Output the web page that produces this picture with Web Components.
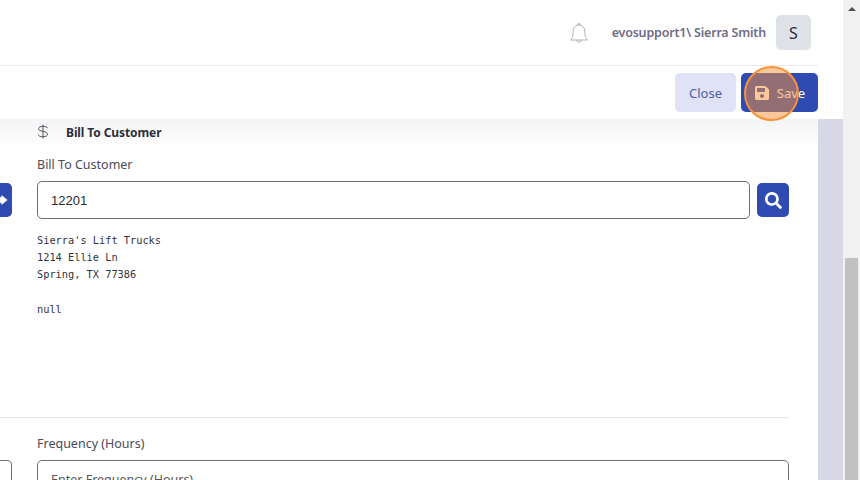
<!DOCTYPE html>
<html>
<head>
<meta charset="utf-8">
<title>Bill To Customer</title>
<style>
  html, body { margin: 0; height: 100%; overflow: hidden; background: #fff; }
  body { font-family: "Noto Sans", "Open Sans", sans-serif; }
</style>
</head>
<body>
<app-shell>
  <top-bar name="evosupport1\ Sierra Smith" initial="S"></top-bar>
  <action-bar></action-bar>
  <section-head>Bill To Customer</section-head>
  <form-row>
    <blue-button slot="left" icon="arrow"></blue-button>
    <text-field label="Bill To Customer" value="12201">
      <blue-button icon="search"></blue-button>
    </text-field>
    <address-block slot="after">Sierra's Lift Trucks
1214 Ellie Ln
Spring, TX 77386

null</address-block>
  </form-row>
  <hr-line></hr-line>
  <form-row class="second">
    <text-field slot="left" stub></text-field>
    <text-field label="Frequency (Hours)" placeholder="Enter Frequency (Hours)"></text-field>
  </form-row>
</app-shell>

<script>
function define(name, html) {
  customElements.define(name, class extends HTMLElement {
    connectedCallback() {
      if (this.shadowRoot) return;
      const root = this.attachShadow({ mode: "open" });
      root.innerHTML = typeof html === "function" ? html(this) : html;
    }
  });
}

define("app-shell", `
<style>
  :host { display: flex; height: 480px; width: 860px; position: relative; overflow: hidden; }
  .main { width: 818px; background: #fff; display: flex; flex-direction: column; overflow: hidden; flex: none; }
  .gutter { width: 25px; background: #d7d7e5; flex: none; margin-top: 119px; }
  .bar { width: 17px; background: #f1f1f1; flex: none; display: flex; flex-direction: column; align-items: center; }
  .arrow { margin-top: 7px; width: 0; height: 0; border: 4px solid transparent; border-top: 0; border-bottom: 4px solid #505050; }
  .thumb { margin-top: 247px; width: 13px; flex: 1; background: #c1c1c1; }
</style>
<div class="main"><slot></slot></div>
<div class="gutter"></div>
<div class="bar"><div class="arrow"></div><div class="thumb"></div></div>
`);

define("top-bar", el => `
<style>
  :host { display: flex; align-items: center; justify-content: flex-end; width: 843px; height: 66px; flex: none; box-sizing: border-box; padding-right: 32px; background: #fff; border-bottom: 1px solid #e9e9ee; position: relative; z-index: 2; }
  svg { width: 20px; height: 22px; margin-right: 23px; margin-top: 1px; }
  .name { font-size: 12.5px; font-weight: 600; color: #6f6c86; margin-right: 10px; letter-spacing: -.2px; white-space: nowrap; }
  .avatar { width: 35px; height: 35px; border-radius: 5px; background: #dee2e6; color: #2b2b3a; display: flex; align-items: center; justify-content: center; font-size: 16px; }
</style>
<svg viewBox="0 0 20 22" fill="none" stroke="#b0b0b0" stroke-width="1"><path d="M10 3a5.800 5.800 0 0 0-5.800 5.800c0 5.200-.7 7-2.600 9.200h16.800c-1.900-2.200-2.600-4-2.600-9.200A5.800 5.800 0 0 0 10 3zM8.600 3.200a1.400 1.700 0 0 1 2.800 0M7.800 18a2.200 2.200 0 0 0 4.400 0"/></svg>
<span class="name">${el.getAttribute("name")}</span>
<span class="avatar">${el.getAttribute("initial")}</span>
`);

define("action-bar", `
<style>
  :host { display: flex; align-items: center; justify-content: flex-end; gap: 5px; width: 843px; height: 53px; flex: none; box-sizing: border-box; padding: 0 25px 0 0; background: #fff; position: relative; z-index: 2; }
  .btn { height: 39px; border-radius: 5px; display: flex; align-items: center; justify-content: center; font-size: 13px; box-sizing: border-box; }
  .close { width: 61px; background: #dfe3f5; color: #4d5ca8; }
  .save { width: 77px; background: #2f4bb1; color: #fff; gap: 7px; position: relative; }
  svg { width: 16px; height: 16px; }
  .spot { position: absolute; left: 3px; top: -7px; width: 55px; height: 55px; box-sizing: border-box; border-radius: 50%; border: 2.5px solid #f79238; background: rgba(247,146,56,.5); }
</style>
<div class="btn close">Close</div>
<div class="btn save">
  <svg viewBox="0 0 448 512" fill="#fff"><path d="M433.941 129.941l-83.882-83.882A48 48 0 0 0 316.118 32H48C21.490 32 0 53.490 0 80v352c0 26.510 21.490 48 48 48h352c26.510 0 48-21.490 48-48V163.882a48 48 0 0 0-14.059-33.941zM224 416c-35.346 0-64-28.654-64-64 0-35.346 28.654-64 64-64s64 28.654 64 64c0 35.346-28.654 64-64 64zm96-304.520V212c0 6.627-5.373 12-12 12H76c-6.627 0-12-5.373-12-12V108c0-6.627 5.373-12 12-12h228.520c3.183 0 6.235 1.264 8.485 3.515l3.480 3.480A11.996 11.996 0 0 1 320 111.480z"/></svg>
  <span>Save</span>
  <div class="spot"></div>
</div>
`);

define("section-head", `
<style>
  :host { display: flex; align-items: center; height: 26px; flex: none; box-sizing: border-box; padding-left: 37px; background: linear-gradient(#f4f4f6, #fdfdfd); font-size: 12px; font-weight: 700; color: #2e2e38; letter-spacing: -.1px; }
  svg { width: 12px; height: 15px; margin-right: 17px; margin-top: -1px; }
</style>
<svg viewBox="0 0 12 15" fill="none" stroke="#55555f" stroke-width="1"><path d="M10.500 4.200C10.300 2.900 8.800 2.400 6 2.400 3.200 2.400 1.600 3.100 1.600 4.700 1.600 6.400 3.500 6.900 6 7.400c2.700.5 4.500 1.100 4.500 2.900 0 1.700-1.700 2.400-4.500 2.400-2.900 0-4.400-.7-4.600-2.200M6 .5v14"/></svg><slot></slot>
`);

define("form-row", `
<style>
  :host { display: grid; grid-template-columns: 12px 752px; column-gap: 25px; flex: none; }
  .left { display: flex; align-items: flex-start; justify-content: flex-end; min-width: 0; }
  .after { grid-column: 2; }
  :host(.second) { padding-top: 16px; }
  :host(:not(.second)) { padding-top: 10px; }
  :host(:not(.second)) .left { padding-top: 28px; }
  :host(.second) .left { padding-top: 26px; }
</style>
<div class="left"><slot name="left"></slot></div>
<div><slot></slot></div>
<div class="after"><slot name="after"></slot></div>
`);

define("text-field", el => {
  const stub = el.hasAttribute("stub");
  const label = el.getAttribute("label");
  const value = el.getAttribute("value") || "";
  const ph = el.getAttribute("placeholder") || "";
  return `
<style>
  :host { display: block; font-size: 12.5px; color: #4a4a55; }
  :host([stub]) { width: 12px; margin-left: auto; }
  .label { height: 18px; line-height: 18px; padding-top: 1px; margin-bottom: 7px; display: block; white-space: nowrap; }
  .line { display: flex; align-items: center; gap: 7px; }
  .box { flex: 1; min-width: 0; height: 38px; box-sizing: border-box; border: 1px solid #6f6f6f; border-radius: 5px; background: #fff; padding: 0 13px; display: flex; align-items: center; font-family: "Liberation Sans", sans-serif; font-size: 13px; white-space: nowrap; overflow: hidden; }
  :host([stub]) .box { width: 12px; flex: none; border-left: 0; border-radius: 0 5px 5px 0; padding: 0; }
  .val { color: #2b2b33; }
  .ph { color: #555; font-family: "Noto Sans", sans-serif; font-size: 12.5px; }
</style>
${stub ? "" : `<span class="label">${label}</span>`}
<div class="line">
  <div class="box">${value ? `<span class="val">${value}</span>` : `<span class="ph">${ph}</span>`}</div>
  <slot></slot>
</div>`;
});

define("blue-button", el => {
  const arrow = `<svg class="arrow" viewBox="0 0 12 12" fill="#fff"><path d="M0 3h1.500V1L7.500 6l-6 5V9H0z"/></svg>`;
  const search = `<svg viewBox="0 0 512 512" fill="#fff"><path d="M505 442.700L405.300 343c-4.500-4.500-10.600-7-17-7H372c27.600-35.300 44-79.700 44-128C416 93.100 322.900 0 208 0S0 93.100 0 208s93.100 208 208 208c48.300 0 92.700-16.400 128-44v16.300c0 6.400 2.500 12.500 7 17l99.700 99.700c9.400 9.400 24.600 9.400 33.900 0l28.300-28.300c9.400-9.400 9.400-24.600.1-34zM208 336c-70.700 0-128-57.200-128-128 0-70.700 57.200-128 128-128 70.700 0 128 57.200 128 128 0 70.700-57.200 128-128 128z"/></svg>`;
  const isArrow = el.getAttribute("icon") === "arrow";
  return `
<style>
  :host { display: block; flex: none; }
  .b { height: 34px; border-radius: 5px; background: #2f4bb1; display: flex; align-items: center; justify-content: center; width: ${isArrow ? 12 : 32}px; overflow: hidden; }
  svg { width: 17px; height: 17px; flex: none; }
  svg.arrow { width: 12px; height: 12px; }
  .b.left { border-radius: 0 5px 5px 0; justify-content: flex-start; }
</style>
<div class="b ${isArrow ? "left" : ""}">${isArrow ? arrow : search}</div>`;
});

define("address-block", `
<style>
  :host { display: block; margin-top: 13px; height: 170px; font-family: "DejaVu Sans Mono", monospace; font-size: 10.3px; line-height: 17.2px; color: #33333c; }
  div { white-space: pre; }
</style>
<div><slot></slot></div>
`);

define("hr-line", `
<style>
  :host { display: block; width: 789px; height: 1px; background: #e6e6e6; flex: none; margin-top: 15px; }
</style>
`);
</script>
</body>
</html>
